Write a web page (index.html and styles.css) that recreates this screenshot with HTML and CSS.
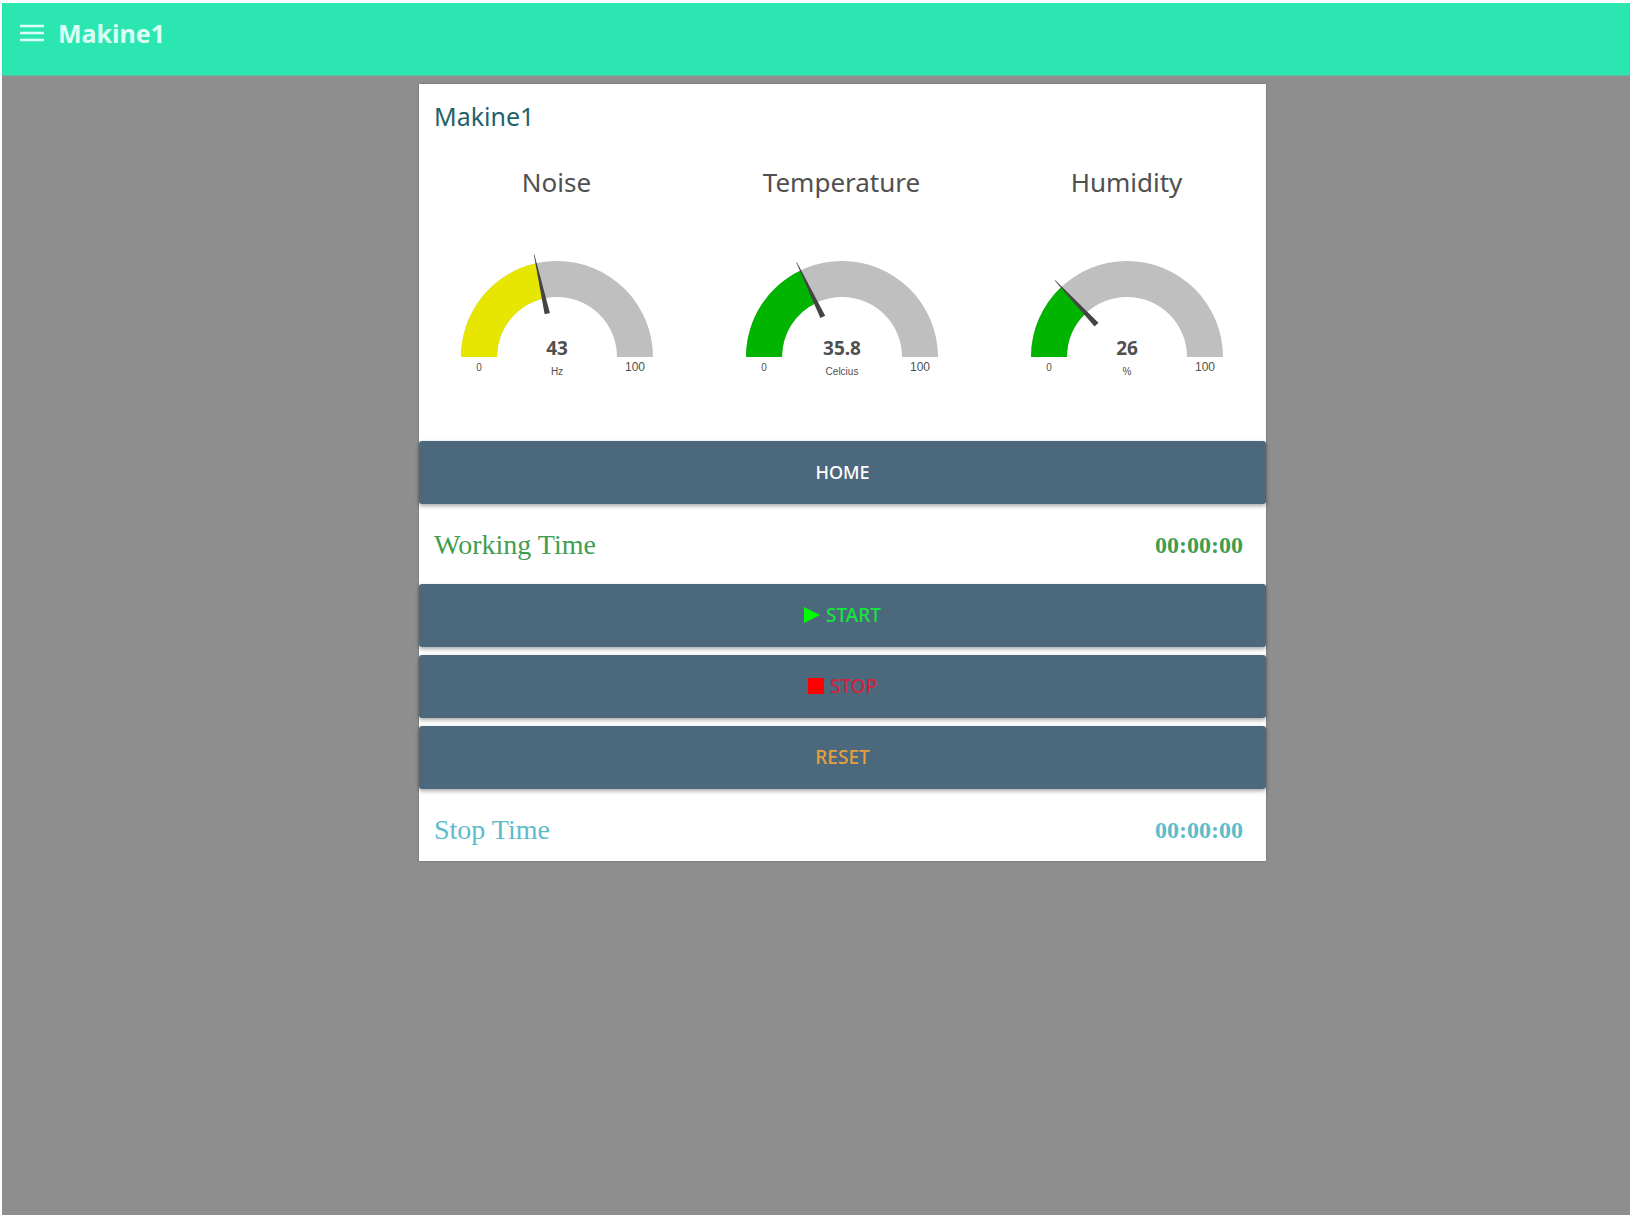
FILE: index.html
```html
<!DOCTYPE html>
<html lang="en">
<head>
<meta charset="utf-8">
<meta name="viewport" content="width=device-width, initial-scale=1">
<title>Makine1</title>
<link rel="stylesheet" href="styles.css">
</head>
<body>
<div class="app">
  <header class="toolbar">
    <button class="menu-button" type="button" aria-label="Menu">
      <svg width="24" height="18" viewBox="0 0 24 18" aria-hidden="true"><path d="M0 2h24M0 9h24M0 16h24" stroke="currentColor" stroke-width="2.6"/></svg>
    </button>
    <h1 class="toolbar-title">Makine1</h1>
  </header>
  <main class="content">
    <section class="card">
      <h2 class="card-title">Makine1</h2>
      <div class="gauges">
        <div class="gauge">
          <h3 class="gauge-title">Noise</h3>
          <svg class="gauge-dial" viewBox="-120 -120 240 150">
            <path class="track" d="M-96 0A96 96 0 0 1 96 0H60A60 60 0 0 0 -60 0Z"/>
            <path class="level-mid" d="M-96 0A96 96 0 0 1 -20.9 -93.7L-13.1 -58.6A60 60 0 0 0 -60 0Z"/>
            <path class="needle" transform="rotate(77.4)" d="M-105 -.3L-44.5 -2.7V2.7L-105 .3Z"/>
            <text class="value" x="0" y="-2">43</text>
            <text class="unit" x="0" y="18">Hz</text>
            <text class="min" x="-78" y="14">0</text>
            <text class="max" x="78" y="14">100</text>
          </svg>
        </div>
        <div class="gauge">
          <h3 class="gauge-title">Temperature</h3>
          <svg class="gauge-dial" viewBox="-120 -120 240 150">
            <path class="track" d="M-96 0A96 96 0 0 1 96 0H60A60 60 0 0 0 -60 0Z"/>
            <path class="level-low" d="M-96 0A96 96 0 0 1 -41.4 -86.6L-25.9 -54.1A60 60 0 0 0 -60 0Z"/>
            <path class="needle" transform="rotate(64.4)" d="M-105 -.3L-44.5 -2.7V2.7L-105 .3Z"/>
            <text class="value" x="0" y="-2">35.8</text>
            <text class="unit" x="0" y="18">Celcius</text>
            <text class="min" x="-78" y="14">0</text>
            <text class="max" x="78" y="14">100</text>
          </svg>
        </div>
        <div class="gauge">
          <h3 class="gauge-title">Humidity</h3>
          <svg class="gauge-dial" viewBox="-120 -120 240 150">
            <path class="track" d="M-96 0A96 96 0 0 1 96 0H60A60 60 0 0 0 -60 0Z"/>
            <path class="level-low" d="M-96 0A96 96 0 0 1 -65.7 -70L-41.1 -43.7A60 60 0 0 0 -60 0Z"/>
            <path class="needle" transform="rotate(46.8)" d="M-105 -.3L-44.5 -2.7V2.7L-105 .3Z"/>
            <text class="value" x="0" y="-2">26</text>
            <text class="unit" x="0" y="18">%</text>
            <text class="min" x="-78" y="14">0</text>
            <text class="max" x="78" y="14">100</text>
          </svg>
        </div>
      </div>
      <button class="action" type="button">HOME</button>
      <div class="timer working">
        <span>Working Time</span>
        <span class="clock">00:00:00</span>
      </div>
      <div class="actions">
        <button class="action start" type="button">
          <svg width="16" height="16" viewBox="0 0 16 16" aria-hidden="true"><path d="M0 0L16 8L0 16Z" fill="#00ff00"/></svg>
          START
        </button>
        <button class="action stop" type="button">
          <svg width="16" height="16" viewBox="0 0 16 16" aria-hidden="true"><path d="M0 0H16V16H0Z" fill="#ff0000"/></svg>
          STOP
        </button>
        <button class="action reset" type="button">RESET</button>
      </div>
      <div class="timer stopped">
        <span>Stop Time</span>
        <span class="clock">00:00:00</span>
      </div>
    </section>
  </main>
</div>
</body>
</html>
```
FILE: styles.css
```css
* {
  box-sizing: border-box;
}

body {
  margin: 0;
  background: #fff;
  font-family: "Noto Sans", sans-serif;
  color: #505050;
}

h1, h2, h3 {
  margin: 0;
  font-weight: 400;
}

.app {
  min-height: 100vh;
  border-top: 3px solid #fff;
  border-left: 2px solid #fff;
  background: #8e8e8e;
}

.toolbar {
  display: flex;
  align-items: flex-start;
  gap: 14px;
  height: 73px;
  padding: 14px 18px;
  background: #2ce6b2;
  border-bottom: 1px solid #5bbd9f;
  color: #dcfff5;
}

.menu-button {
  display: flex;
  align-items: center;
  height: 32px;
  padding: 0;
  border: 0;
  background: none;
  color: inherit;
}

.toolbar-title {
  font-size: 25px;
  line-height: 32px;
  font-weight: 700;
}

.content {
  display: grid;
  grid-template-columns: 417fr 847fr 364fr;
  padding-top: 8px;
}

.card {
  grid-column: 2;
  min-width: 0;
  background: #fff;
  box-shadow: 0 0 2px rgba(0, 0, 0, 0.3);
}

.card-title {
  padding: 16px 15px 0;
  font-size: 25px;
  line-height: 32px;
  color: #1f6169;
}

.gauges {
  display: grid;
  grid-template-columns: repeat(3, 1fr);
  margin: 0 -3px 0 -5px;
  padding: 34px 0 54px;
}

.gauge {
  display: flex;
  flex-direction: column;
  align-items: center;
}

.gauge-title {
  font-size: 26px;
  line-height: 32px;
}

.gauge-dial {
  width: 240px;
  height: 150px;
  margin-top: 39px;
}

.track {
  fill: #bfbfbf;
}

.level-low {
  fill: #00b400;
}

.level-mid {
  fill: #e6e600;
}

.needle {
  fill: #444;
}

.gauge-dial text {
  text-anchor: middle;
  fill: #505050;
  font-family: "Liberation Sans", Arial, sans-serif;
}

.gauge-dial .value {
  font: 700 19px "Noto Sans", sans-serif;
}

.gauge-dial .unit,
.gauge-dial .min {
  font-size: 10px;
}

.gauge-dial .max {
  font-size: 12px;
}

.actions {
  display: grid;
  gap: 8px;
}

.action {
  display: flex;
  align-items: center;
  justify-content: center;
  gap: 6px;
  width: 100%;
  height: 63px;
  padding: 0 16px 2px;
  border: 0;
  border-radius: 3px;
  background: #4c687c;
  box-shadow: 0 2px 4px rgba(0, 0, 0, 0.35);
  color: #fff;
  font: 500 18px "Noto Sans", sans-serif;
}

.actions .action {
  font-size: 19px;
}

.start {
  color: #14e63c;
}

.stop {
  color: #d2223c;
}

.reset {
  color: #e6a03c;
}

.timer {
  display: flex;
  align-items: center;
  justify-content: space-between;
  height: 80px;
  padding: 2px 23px 0 15px;
  font-family: "Liberation Serif", serif;
  font-size: 28px;
}

.clock {
  font-size: 24px;
  font-weight: 700;
}

.working {
  color: #3f9e50;
}

.stopped {
  height: 72px;
  padding-top: 10px;
  color: #5cbccb;
}
```
